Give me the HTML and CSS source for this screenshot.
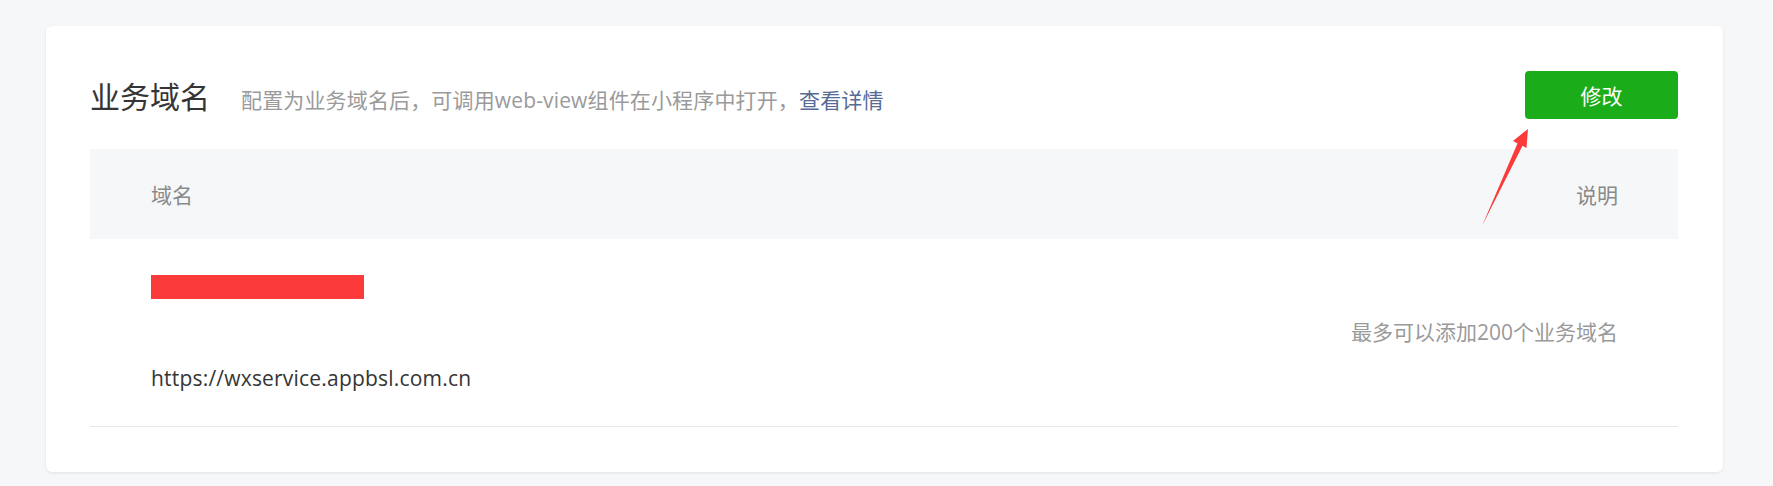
FILE: index.html
```html
<!DOCTYPE html>
<html lang="zh-CN">
<head>
<meta charset="utf-8">
<title>业务域名</title>
<link rel="stylesheet" href="styles.css">
</head>
<body>
<div class="card">
  <div class="card-head">
    <div class="head-info">
      <h2 class="title">业务域名</h2>
      <p class="desc">配置为业务域名后，可调用web-view组件在小程序中打开，<a class="link" href="#">查看详情</a></p>
    </div>
    <button class="btn-primary" type="button">修改</button>
  </div>
  <div class="table">
    <div class="thead">
      <div class="th">域名</div>
      <div class="th th-right">说明</div>
    </div>
    <div class="tr">
      <div class="td td-domain">
        <div class="redact"></div>
        <div class="url">https://wxservice.appbsl.com.cn</div>
      </div>
      <div class="td td-right">最多可以添加200个业务域名</div>
    </div>
  </div>
  <svg class="arrow" width="60" height="110" viewBox="0 0 60 110" aria-hidden="true">
    <polygon points="50,4 35,16 39.5,18.5 4,101 44.5,20.8 48.5,23" fill="#fb3a3a"/>
  </svg>
</div>
</body>
</html>
```

FILE: styles.css
```css
* { box-sizing: border-box; }
html, body { margin: 0; padding: 0; }
body {
  background: #f6f7f9;
  font-family: "Open Sans", "Noto Sans CJK SC", sans-serif;
  font-size: 21px;
  color: #353535;
  width: 1773px;
  height: 486px;
  overflow: hidden;
}
.card {
  position: relative;
  margin: 26px 50px 0 46px;
  background: #fff;
  border-radius: 6px;
  box-shadow: 0 1px 3px rgba(0, 0, 0, 0.09);
  padding: 45px 45px 45px 44px;
}
.card-head {
  display: flex;
  align-items: center;
  justify-content: space-between;
  height: 48px;
}
.head-info {
  display: flex;
  align-items: baseline;
}
.title {
  margin: 0;
  font-size: 30px;
  font-weight: 400;
  color: #353535;
  font-family: "Noto Sans CJK SC", sans-serif;
  line-height: 48px;
}
.desc {
  margin: 0 0 0 31px;
  font-size: 21px;
  color: #9a9a9a;
  letter-spacing: 0.15px;
}
.link {
  color: #576b95;
  text-decoration: none;
}
.btn-primary {
  width: 153px;
  height: 48px;
  border: 0;
  border-radius: 4px;
  background: #1aad19;
  color: #fff;
  font-family: "Noto Sans CJK SC", sans-serif;
  font-size: 21px;
  padding: 0;
}
.table {
  margin-top: 30px;
}
.thead {
  display: flex;
  justify-content: space-between;
  align-items: center;
  height: 90px;
  background: #f6f7f9;
  padding: 0 60px 0 61px;
}
.th {
  color: #8a8a8a;
  font-size: 21px;
}
.tr {
  display: flex;
  justify-content: space-between;
  align-items: center;
  height: 188px;
  border-bottom: 1px solid #e7e7eb;
  padding: 0 60px 0 61px;
}
.td-domain {
  align-self: stretch;
  padding-top: 36px;
}
.redact {
  width: 213px;
  height: 24px;
  background: #fb3a3a;
}
.url {
  margin-top: 64px;
  line-height: 30px;
  color: #353535;
  letter-spacing: 0.2px;
}
.td-right {
  color: #9a9a9a;
  margin-bottom: 4px;
}
.arrow {
  position: absolute;
  left: 1432px;
  top: 99px;
}
```
